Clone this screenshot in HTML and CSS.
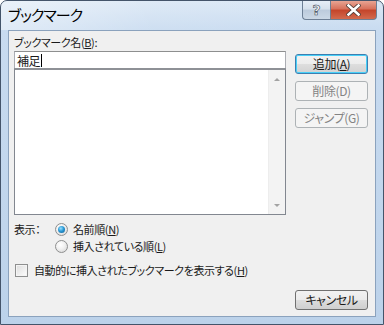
FILE: index.html
```html
<!DOCTYPE html>
<html lang="ja">
<head>
    <meta charset="UTF-8">
    <title>ブックマーク</title>
    <link rel="stylesheet" href="styles.css">
</head>
<body>
    <div class="window">
        <div class="titlebar">
            <span class="title">ブックマーク</span>
            <div class="caption-buttons">
                <div class="cap-btn help">?</div>
                <div class="cap-btn close">
                    <svg width="15" height="12" viewBox="0 0 15 12">
                        <path d="M2.5 1.5 L12.5 10.5 M12.5 1.5 L2.5 10.5" stroke="#4a3a36" stroke-width="4.2" stroke-linecap="square"/>
                        <path d="M2.5 1.5 L12.5 10.5 M12.5 1.5 L2.5 10.5" stroke="#ffffff" stroke-width="2.6" stroke-linecap="square"/>
                    </svg>
                </div>
            </div>
        </div>
        <div class="client">
            <div class="top">
                <div class="main">
                    <div class="label">ブックマーク名(<u>B</u>):</div>
                    <div class="textbox">補足<span class="caret"></span></div>
                    <div class="listbox">
                        <div class="scrollbar">
                            <span class="arrow up"></span>
                            <span class="arrow down"></span>
                        </div>
                    </div>
                </div>
                <div class="side">
                    <div class="btn default">追加(<u>A</u>)</div>
                    <div class="btn disabled">削除(D)</div>
                    <div class="btn disabled">ジャンプ(G)</div>
                </div>
            </div>

            <div class="display">
                <div class="display-label">表示：</div>
                <div class="options">
                    <div class="option"><span class="radio checked"></span>名前順(<u>N</u>)</div>
                    <div class="option"><span class="radio"></span>挿入されている順(<u>L</u>)</div>
                </div>
            </div>

            <div class="check-row"><span class="checkbox"></span>自動的に挿入されたブックマークを表示する(<u>H</u>)</div>

            <div class="bottom">
                <div class="btn">キャンセル</div>
            </div>
        </div>
    </div>
</body>
</html>
```

FILE: styles.css
```css
body {
    margin: 0;
    padding: 0;
    background: #ffffff;
    font-family: "Noto Sans CJK JP", sans-serif;
    font-size: 11px;
    letter-spacing: -0.4px;
    font-feature-settings: "palt";
    color: #1a1a1a;
}

u {
    text-decoration: underline;
    text-underline-offset: 1px;
}

.window {
    width: 384px;
    height: 325px;
    box-sizing: border-box;
    border: 1px solid #44546a;
    border-radius: 7px 7px 0 0;
    background: linear-gradient(to bottom, #dae7f5 0px, #c8dbf0 30px, #bcd2ea 100%);
    display: flex;
    flex-direction: column;
    overflow: hidden;
}

.titlebar {
    height: 29px;
    display: flex;
    justify-content: space-between;
    align-items: flex-start;
    background: linear-gradient(100deg, rgba(255,255,255,0.45) 0%, rgba(255,255,255,0.1) 40%, rgba(255,255,255,0) 100%);
}

.title {
    font-size: 15px;
    letter-spacing: -1px;
    padding: 4px 0 0 7px;
    line-height: 20px;
    color: #000;
}

.caption-buttons {
    display: flex;
    margin-right: 6px;
}

.cap-btn {
    height: 19px;
    box-sizing: border-box;
    border: 1px solid #6d7f95;
    border-top: none;
    display: flex;
    align-items: center;
    justify-content: center;
}

.help {
    width: 28px;
    border-right: none;
    border-radius: 0 0 0 4px;
    background: linear-gradient(to bottom, #e6eef7 0%, #d5e0ec 45%, #bccbdc 50%, #cbd8e6 100%);
    color: #f2f2f2;
    font-family: "DejaVu Sans", sans-serif;
    font-weight: bold;
    font-size: 14px;
    letter-spacing: 0;
    line-height: 16px;
    -webkit-text-stroke: 0.6px #3f4b5b;
}

.close {
    width: 47px;
    border-radius: 0 0 4px 0;
    background: linear-gradient(to bottom, #e8a493 0%, #d7705a 45%, #c4442a 50%, #d26a4e 100%);
}

.client {
    flex: 1;
    margin: 0 7px 7px 7px;
    border: 1px solid #8ba2bd;
    background: #f0f0f0;
    padding: 3px 7px 0 5px;
}

.top {
    display: flex;
    justify-content: space-between;
}

.main {
    width: 272px;
}

.label {
    height: 17px;
    line-height: 16px;
}

.textbox {
    height: 17px;
    box-sizing: border-box;
    border: 1px solid #abadb3;
    border-top-color: #8e8f8f;
    border-bottom: none;
    background: #fff;
    padding: 0 2px;
    line-height: 15px;
    font-size: 12px;
    display: flex;
    align-items: center;
}

.caret {
    display: inline-block;
    width: 1px;
    height: 13px;
    background: #000;
    margin-left: 1px;
}

.listbox {
    height: 147px;
    box-sizing: border-box;
    border: 1px solid #828790;
    border-top: 2px solid #8e9196;
    background: #fff;
    display: flex;
    justify-content: flex-end;
}

.scrollbar {
    width: 16px;
    background: #f3f3f3;
    border-left: 1px solid #ededed;
    display: flex;
    flex-direction: column;
    justify-content: space-between;
    align-items: center;
    padding: 8px 0 7px;
}

.arrow {
    width: 0;
    height: 0;
    border-left: 3px solid transparent;
    border-right: 3px solid transparent;
}

.arrow.up {
    border-bottom: 3px solid #a3a3a3;
}

.arrow.down {
    border-top: 3px solid #a3a3a3;
}

.side {
    width: 73px;
    padding-top: 20px;
    display: flex;
    flex-direction: column;
    gap: 7px;
}

.btn {
    height: 20px;
    box-sizing: border-box;
    border: 1px solid #707070;
    border-radius: 3px;
    background: linear-gradient(to bottom, #f2f2f2 0%, #ebebeb 50%, #dddddd 50%, #cfcfcf 100%);
    display: flex;
    align-items: center;
    justify-content: center;
    line-height: 14px;
    font-size: 12px;
}

.btn.default {
    border-color: #3c7fb1;
    box-shadow: inset 0 0 0 1px #48d0f8;
    background: linear-gradient(to bottom, #f3f3f3 0%, #ececec 50%, #dedede 50%, #d2d2d2 100%);
}

.btn.disabled {
    border-color: #adb2b5;
    background: #f4f4f4;
    color: #838383;
}

.display {
    display: flex;
    margin-top: 6px;
}

.display-label {
    width: 41px;
    line-height: 16px;
}

.options {
    display: flex;
    flex-direction: column;
    gap: 1px;
}

.option {
    display: flex;
    align-items: center;
    height: 16px;
}

.radio {
    width: 11px;
    height: 11px;
    border: 1px solid #8e8f8f;
    border-radius: 50%;
    background: radial-gradient(circle at 40% 35%, #ffffff 0%, #f2f2f2 40%, #d2d2d2 100%);
    margin-right: 5px;
    position: relative;
    box-sizing: content-box;
}

.radio.checked::after {
    content: "";
    position: absolute;
    left: 2px;
    top: 2px;
    width: 7px;
    height: 7px;
    border-radius: 50%;
    background: radial-gradient(circle at 40% 35%, #9ae0ff 0%, #2b9ad6 45%, #0d5a8f 100%);
}

.check-row {
    display: flex;
    align-items: center;
    margin-top: 8px;
    margin-left: 1px;
    height: 16px;
}

.checkbox {
    width: 11px;
    height: 11px;
    border: 1px solid #8e8f8f;
    background: linear-gradient(135deg, #dcdcdc 0%, #f0f0f0 60%, #ffffff 100%);
    box-shadow: inset 0 0 0 1px #f4f4f4;
    margin-right: 6px;
}

.bottom {
    display: flex;
    justify-content: flex-end;
    margin-top: 12px;
}

.bottom .btn {
    width: 73px;
}
```
